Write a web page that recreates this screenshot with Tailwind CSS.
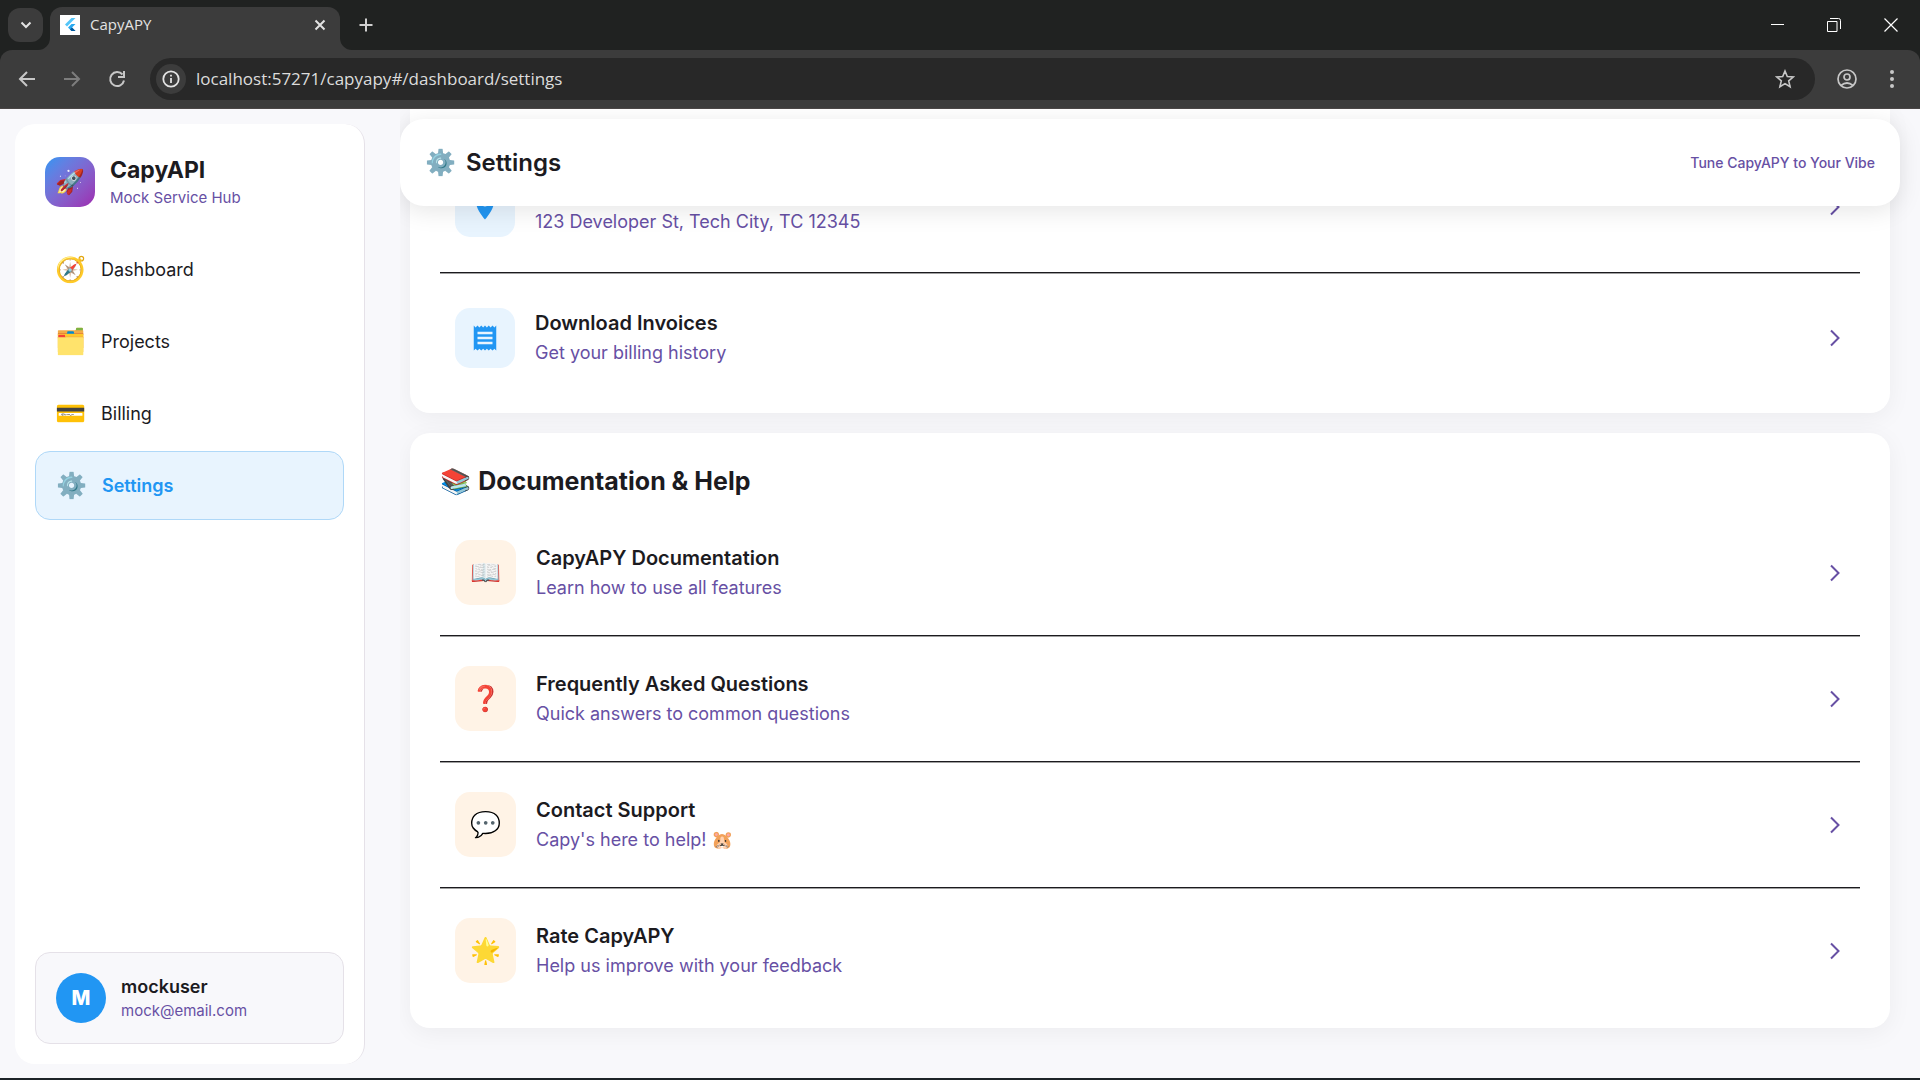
<!DOCTYPE html>
<html lang="en">
<head>
<meta charset="utf-8">
<meta name="viewport" content="width=device-width, initial-scale=1">
<title>CapyAPY</title>
<script src="https://cdn.jsdelivr.net/npm/@tailwindcss/browser@4"></script>
</head>
<body class="flex h-screen flex-col overflow-hidden bg-[#1d2328] pb-0.5 font-['Inter','Noto_Color_Emoji',sans-serif] text-[#1c1b1f]">

<svg class="hidden">
  <symbol id="chevron" viewBox="0 0 12 20"><path d="M2 2.5 9.5 10 2 17.500" fill="none" stroke="currentColor" stroke-width="2"/></symbol>
</svg>

<!-- Browser window -->
<div class="shrink-0 bg-[#202221] font-['Open_Sans',sans-serif]">
  <div class="flex h-[50px] items-end">
    <button aria-label="Search tabs" class="mb-2 ml-2 flex h-[34px] w-[35px] items-center justify-center rounded-xl bg-[#3c3c3c] text-[#e3e3e3]">
      <svg class="size-3" viewBox="0 0 12 12"><path d="M1.500 3.500 6 8l4.500-4.500" fill="none" stroke="currentColor" stroke-width="2"/></svg>
    </button>
    <div class="relative ml-[7px] flex h-[43px] w-[290px] items-center rounded-t-xl bg-[#3c3c3c] px-2.5 pb-2">
      <svg class="absolute bottom-0 -left-3 size-3 text-[#3c3c3c]" viewBox="0 0 12 12"><path d="M12 0v12H0A12 12 0 0 0 12 0Z" fill="currentColor"/></svg>
      <svg class="absolute bottom-0 -right-3 size-3 text-[#3c3c3c]" viewBox="0 0 12 12"><path d="M0 0v12h12A12 12 0 0 1 0 0Z" fill="currentColor"/></svg>
      <svg class="size-5 bg-white" viewBox="0 0 20 20">
        <path d="M11.500 3h4L7 11.500 5 9.500Z" fill="#54c5f8"/>
        <path d="M11.500 9h4L12 12.500l3.500 3.500h-4L8 12.500Z" fill="#29a9f0"/>
        <path d="m10 14.500 2-2 3.500 3.500h-4Z" fill="#01579b"/>
      </svg>
      <span class="ml-2.5 flex-1 text-[15px] text-[#e3e3e3]">CapyAPY</span>
      <button aria-label="Close tab" class="flex size-5 items-center justify-center text-[#e3e3e3]">
        <svg class="size-3" viewBox="0 0 12 12"><path d="m1.500 1.500 9 9m0-9-9 9" stroke="currentColor" stroke-width="2"/></svg>
      </button>
    </div>
    <button aria-label="New tab" class="mb-[18px] ml-[19px] text-[#d0d0d0]">
      <svg class="size-3.5" viewBox="0 0 14 14"><path d="M7 .5v13M.5 7h13" stroke="currentColor" stroke-width="2"/></svg>
    </button>
    <div class="ml-auto flex h-full items-center text-white">
      <button aria-label="Minimise" class="flex w-14 justify-center"><svg class="size-3.5" viewBox="0 0 14 14"><path d="M0 6.500h13" stroke="currentColor"/></svg></button>
      <button aria-label="Restore" class="flex w-14 justify-center"><svg class="size-3.5" viewBox="0 0 14 14"><path d="M.5 3.500h9.500v10H.5ZM3 .5h8.500q2 0 2 2V11" fill="none" stroke="currentColor"/></svg></button>
      <button aria-label="Close" class="flex w-[58px] justify-center"><svg class="size-3.5" viewBox="0 0 14 14"><path d="m.5.5 13 13m0-13-13 13" stroke="currentColor" stroke-width="1.200"/></svg></button>
    </div>
  </div>
  <div class="flex h-[59px] items-center rounded-t-xl border-b border-[#4a4646] bg-[#3c3c3c] pl-[17px] text-[#c7c7c7]">
    <button aria-label="Back" class="mr-[25px]"><svg class="size-5" viewBox="0 0 20 20"><path d="M18 10H3.500M10 3 3 10l7 7" fill="none" stroke="currentColor" stroke-width="2"/></svg></button>
    <button aria-label="Forward" class="mr-[25px] text-[#7d7d7d]"><svg class="size-5" viewBox="0 0 20 20"><path d="M2 10h14.500M10 3l7 7-7 7" fill="none" stroke="currentColor" stroke-width="2"/></svg></button>
    <button aria-label="Reload" class="mr-[23px]"><svg class="size-5" viewBox="0 0 20 20"><path d="M15.500 5.500A7 7 0 1 0 17 11.500" fill="none" stroke="currentColor" stroke-width="2"/><path d="M17 2v6h-6" fill="none" stroke="currentColor" stroke-width="2"/></svg></button>
    <div class="flex h-[42px] flex-1 items-center rounded-full bg-[#282828] px-1.5">
      <button aria-label="Site information" class="flex size-[30px] items-center justify-center rounded-full bg-[#3c3c3c] text-[#e3e3e3]">
        <svg class="size-[18px]" viewBox="0 0 18 18"><circle cx="9" cy="9" r="7.700" fill="none" stroke="currentColor" stroke-width="1.800"/><path d="M9 8v5M9 4.800v1.800" stroke="currentColor" stroke-width="1.800"/></svg>
      </button>
      <input aria-label="Address" type="text" value="localhost:57271/capyapy#/dashboard/settings" class="ml-2.5 flex-1 bg-transparent text-[17px] text-[#dcdcdc] outline-none">
      <button aria-label="Bookmark" class="mr-3.5"><svg class="size-5" viewBox="0 0 20 20"><path d="m10 2 2.300 5.500 5.900.5-4.500 3.900 1.400 5.800L10 14.600l-5.100 3.100 1.400-5.800L1.800 8l5.900-.5Z" fill="none" stroke="currentColor" stroke-width="1.600"/></svg></button>
    </div>
    <button aria-label="Profile" class="ml-[22px]"><svg class="size-5" viewBox="0 0 20 20" fill="none" stroke="currentColor" stroke-width="1.700"><circle cx="10" cy="10" r="9"/><circle cx="10" cy="8" r="3"/><path d="M4 16.500q6-5 12 0"/></svg></button>
    <button aria-label="Menu" class="mr-[18px] ml-[25px]"><svg class="size-5" viewBox="0 0 20 20" fill="currentColor"><circle cx="10" cy="3" r="2"/><circle cx="10" cy="10" r="2"/><circle cx="10" cy="17" r="2"/></svg></button>
  </div>
</div>

<!-- Application -->
<div class="flex min-h-0 flex-1 bg-[#f8f8fb]">
  <aside class="mt-[15px] mb-3.5 ml-[15px] flex w-[350px] shrink-0 flex-col rounded-[20px] border-r border-[#e5e1e8] bg-white px-5 pb-5">
    <div class="mt-[29px] flex items-center gap-[15px] pl-2.5">
      <div class="flex size-[50px] items-center justify-center rounded-[15px] bg-linear-to-br from-[#2196f3] to-[#9c27b0] text-2xl">🚀</div>
      <div class="pt-0.5">
        <h1 class="text-[23px] leading-[30px] font-bold">CapyAPI</h1>
        <p class="text-[15px] leading-[25px] text-[#6750a4]">Mock Service Hub</p>
      </div>
    </div>
    <nav class="mt-[25px] flex flex-col gap-[3px] text-lg">
      <a href="#dashboard" class="flex h-[69px] items-center gap-[15px] rounded-[15px] border border-transparent pl-[19px]"><span class="w-[31px] text-[25px]">🧭</span>Dashboard</a>
      <a href="#projects" class="flex h-[69px] items-center gap-[15px] rounded-[15px] border border-transparent pl-[19px]"><span class="w-[31px] text-[25px]">🗂️</span>Projects</a>
      <a href="#billing" class="flex h-[69px] items-center gap-[15px] rounded-[15px] border border-transparent pl-[19px]"><span class="w-[31px] text-[25px]">💳</span>Billing</a>
      <a href="#settings" aria-current="page" class="flex h-[69px] items-center gap-[15px] rounded-[15px] border border-[#afd8f8] bg-[#e8f4fe] pl-5 font-semibold text-[#2196f3]"><span class="w-[31px] text-[25px]">⚙️</span>Settings</a>
    </nav>
    <div class="mt-auto flex h-[92px] items-center gap-[15px] rounded-[15px] border border-[#e5e1e8] bg-[#f8f8fb] px-5">
      <div class="flex size-[50px] items-center justify-center rounded-full bg-[#2196f3] text-xl font-extrabold text-white">M</div>
      <div class="pt-0.5">
        <p class="text-lg leading-6 font-semibold">mockuser</p>
        <p class="text-[15px] leading-6 text-[#6750a4]">mock@email.com</p>
      </div>
    </div>
  </aside>

  <div class="relative ml-[35px] min-w-0 flex-1 overflow-hidden">
    <header class="absolute top-2.5 right-5 left-0 z-10 flex h-[87px] items-center rounded-3xl bg-white px-[25px] shadow-[0_5px_25px_rgba(0,0,0,0.1)]">
      <span class="w-[41px] text-[25px]">⚙️</span>
      <h2 class="text-2xl font-semibold">Settings</h2>
      <p class="ml-auto text-sm font-medium text-[#6750a4]">Tune CapyAPY to Your Vibe</p>
    </header>

    <main class="mr-[30px] ml-2.5 flex flex-col gap-5">
      <section class="rounded-b-[20px] bg-white px-[30px] pt-[53px] pb-[30px] shadow-[0_5px_25px_rgba(0,0,0,0.05)]">
        <a href="#address" class="flex items-center p-[15px]">
          <span class="flex size-[60px] items-center justify-center rounded-[15px] bg-[#e8f4fe] text-[#2196f3]">
            <svg class="size-[30px]" viewBox="0 0 24 24"><path d="M12 2C8.130 2 5 5.130 5 9c0 5.250 7 13 7 13s7-7.750 7-13c0-3.870-3.130-7-7-7Zm0 9.500a2.500 2.500 0 1 1 0-5 2.500 2.500 0 0 1 0 5Z" fill="currentColor"/></svg>
          </span>
          <span class="ml-5 flex-1"><span class="block text-xl leading-[30px] font-semibold">Billing Address</span><span class="block text-lg leading-[30px] text-[#6750a4]">123 Developer St, Tech City, TC 12345</span></span>
          <svg class="mr-1 h-5 w-3 text-[#6750a4]"><use href="#chevron"/></svg>
        </a>
        <hr class="my-5 h-px border-0 bg-[#1c1b1f] shadow-[0_1px_0_#a0a0a0]">
        <a href="#invoices" class="flex items-center p-[15px]">
          <span class="flex size-[60px] items-center justify-center rounded-[15px] bg-[#e8f4fe] text-[#2196f3]">
            <svg class="size-[30px]" viewBox="0 0 24 24"><path d="M18 17H6v-2h12v2Zm0-4H6v-2h12v2Zm0-4H6V7h12v2ZM3 22l1.500-1.500L6 22l1.500-1.500L9 22l1.500-1.500L12 22l1.500-1.500L15 22l1.500-1.500L18 22l1.500-1.500L21 22V2l-1.500 1.500L18 2l-1.500 1.500L15 2l-1.500 1.500L12 2l-1.500 1.500L9 2 7.500 3.500 6 2 4.500 3.500 3 2v20Z" fill="currentColor"/></svg>
          </span>
          <span class="ml-5 flex-1"><span class="block text-xl leading-[30px] font-semibold">Download Invoices</span><span class="block text-lg leading-[30px] text-[#6750a4]">Get your billing history</span></span>
          <svg class="mr-1 h-5 w-3 text-[#6750a4]"><use href="#chevron"/></svg>
        </a>
      </section>

      <section class="rounded-[20px] bg-white p-[30px] shadow-[0_5px_25px_rgba(0,0,0,0.05)]">
        <h3 class="mb-[26px] flex items-center gap-[7px] text-[25px] leading-9 font-bold"><span class="leading-9">📚</span>Documentation &amp; Help</h3>
        <a href="#docs" class="flex items-center p-[15px]">
          <span class="flex h-[65px] w-[61px] items-center justify-center rounded-[15px] bg-[#fff3e6] text-[25px]">📖</span>
          <span class="ml-5 flex-1"><span class="block text-xl leading-[30px] font-semibold">CapyAPY Documentation</span><span class="block text-lg leading-[30px] text-[#6750a4]">Learn how to use all features</span></span>
          <svg class="mr-1 h-5 w-3 text-[#6750a4]"><use href="#chevron"/></svg>
        </a>
        <hr class="my-[15px] h-px border-0 bg-[#1c1b1f] shadow-[0_1px_0_#a0a0a0]">
        <a href="#faq" class="flex items-center p-[15px]">
          <span class="flex h-[65px] w-[61px] items-center justify-center rounded-[15px] bg-[#fff3e6] text-[25px]">❓</span>
          <span class="ml-5 flex-1"><span class="block text-xl leading-[30px] font-semibold">Frequently Asked Questions</span><span class="block text-lg leading-[30px] text-[#6750a4]">Quick answers to common questions</span></span>
          <svg class="mr-1 h-5 w-3 text-[#6750a4]"><use href="#chevron"/></svg>
        </a>
        <hr class="my-[15px] h-px border-0 bg-[#1c1b1f] shadow-[0_1px_0_#a0a0a0]">
        <a href="#support" class="flex items-center p-[15px]">
          <span class="flex h-[65px] w-[61px] items-center justify-center rounded-[15px] bg-[#fff3e6] text-[25px]">💬</span>
          <span class="ml-5 flex-1"><span class="block text-xl leading-[30px] font-semibold">Contact Support</span><span class="block text-lg leading-[30px] text-[#6750a4]">Capy's here to help! 🐹</span></span>
          <svg class="mr-1 h-5 w-3 text-[#6750a4]"><use href="#chevron"/></svg>
        </a>
        <hr class="my-[15px] h-px border-0 bg-[#1c1b1f] shadow-[0_1px_0_#a0a0a0]">
        <a href="#rate" class="flex items-center p-[15px]">
          <span class="flex h-[65px] w-[61px] items-center justify-center rounded-[15px] bg-[#fff3e6] text-[25px]">🌟</span>
          <span class="ml-5 flex-1"><span class="block text-xl leading-[30px] font-semibold">Rate CapyAPY</span><span class="block text-lg leading-[30px] text-[#6750a4]">Help us improve with your feedback</span></span>
          <svg class="mr-1 h-5 w-3 text-[#6750a4]"><use href="#chevron"/></svg>
        </a>
      </section>
    </main>
  </div>
</div>
</body>
</html>
